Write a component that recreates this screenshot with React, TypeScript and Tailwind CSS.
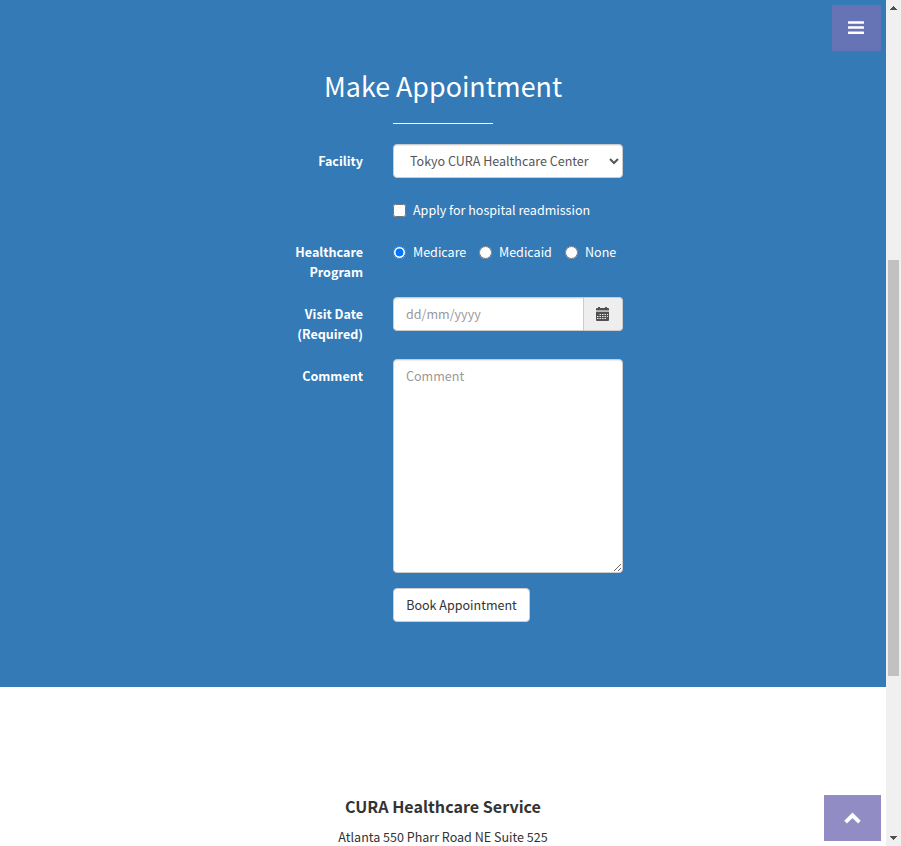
import type { ReactNode } from "react";

function Row({ label, children, className = "" }: { label: ReactNode; children: ReactNode; className?: string }) {
  return (
    <div className={`flex ${className}`}>
      <div className="mr-[30px] w-[100px] shrink-0 pt-[7px] text-right font-bold">{label}</div>
      <div className="w-[230px] shrink-0">{children}</div>
    </div>
  );
}

const field =
  "block w-full rounded-[4px] border border-[#ccc] bg-white px-3 text-[#555] shadow-[inset_0_1px_1px_rgba(0,0,0,0.075)] outline-none placeholder:text-[#999]";

function Program({ name, checked, className = "" }: { name: string; checked?: boolean; className?: string }) {
  return (
    <label className={`flex h-5 items-center ${className}`}>
      <input type="radio" name="program" defaultChecked={checked} className="mr-[7px] size-[13px]" />
      <span>{name}</span>
    </label>
  );
}

function CalendarIcon() {
  return (
    <svg width="13" height="14" viewBox="0 0 13 14" fill="#505050">
      <path d="M0 2Q0 1 1 1H2V0H4V1H9V0H11V1H12Q13 1 13 2V3.6H0Z" />
      <path d="M0 3.6H13V5H0Z" fill="#bbb" />
      <path d="M0 5H13V13Q13 14 12 14H1Q0 14 0 13Z" />
      <path
        d="M3.5 7.5H5M6 7.5H7.5M8.5 7.5H10M11 7.5H12M1 9.5H2.5M3.5 9.5H5M6 9.5H7.5M8.5 9.5H10M11 9.5H12M1 11.5H2.5M3.5 11.5H5M6 11.5H7.5M8.5 11.5H10"
        stroke="#e8e8e8"
        strokeWidth="1"
      />
    </svg>
  );
}

export default function App() {
  return (
    <div className="relative flex h-[846px] w-[901px] overflow-hidden bg-white font-['Noto_Sans_CJK_SC',sans-serif] text-[12.54px] leading-5 text-[#333]">
      <main className="flex w-[886px] flex-col">
        <section className="flex h-[687px] shrink-0 flex-col items-center bg-[#337ab7] text-white">
          <h2 className="mt-[69px] h-[33px] text-[26.85px] leading-[33px] whitespace-nowrap">Make Appointment</h2>
          <div className="mt-[21px] h-px w-[100px] bg-white" />
          <form className="mt-5 ml-[-130px] flex w-[230px] flex-col">
            <Row label="Facility" className="h-[34px]">
              <select className={`${field} h-[34px] pt-[5px] pb-[7px]`} defaultValue="tokyo">
                <option value="tokyo">Tokyo CURA Healthcare Center</option>
              </select>
            </Row>
            <Row label="" className="mt-[22px] h-5">
              <label className="flex h-5 items-center">
                <input type="checkbox" className="mr-[7px] size-[13px]" />
                <span className="whitespace-nowrap">Apply for hospital readmission</span>
              </label>
            </Row>
            <Row label={<>Healthcare<br />Program</>} className="mt-[15px] h-[47px]">
              <div className="flex pt-[7px]">
                <Program name="Medicare" checked className="w-[86px]" />
                <Program name="Medicaid" className="w-[86px]" />
                <Program name="None" />
              </div>
            </Row>
            <Row label={<>Visit Date<br />(Required)</>} className="mt-[15px] h-[47px]">
              <div className="flex h-[34px]">
                <input type="text" placeholder="dd/mm/yyyy" className={`${field} rounded-r-none py-[6px]`} />
                <span className="flex w-[39px] shrink-0 items-center rounded-r-[4px] border border-l-0 border-[#ccc] bg-[#eee] pl-3">
                  <CalendarIcon />
                </span>
              </div>
            </Row>
            <Row label="Comment" className="mt-[15px] h-[214px]">
              <textarea placeholder="Comment" className={`${field} h-[214px] py-[6px]`} />
            </Row>
            <Row label="" className="mt-[15px] h-[34px]">
              <button type="button" className="h-[34px] w-[137px] rounded-[4px] border border-[#ccc] bg-white text-[#333]">
                Book Appointment
              </button>
            </Row>
          </form>
        </section>
        <footer className="flex flex-col items-center pt-[109px]">
          <h4 className="text-[16.1px] leading-5 font-bold">CURA Healthcare Service</h4>
          <p className="mt-[11px]">Atlanta 550 Pharr Road NE Suite 525</p>
        </footer>
      </main>
      <aside className="flex w-[15px] flex-col bg-[#f0f0f0]">
        <svg width="15" height="15" viewBox="0 0 15 15" fill="#505050" shapeRendering="crispEdges">
          <path d="M7 6H8V7H9V8H10V9H11V10H4V9H5V8H6V7H7Z" />
        </svg>
        <div className="mt-[245px] ml-[2px] h-[416px] w-[11px] bg-[#c1c1c1]" />
        <svg className="mt-auto" width="15" height="15" viewBox="0 0 15 15" fill="#505050" shapeRendering="crispEdges">
          <path d="M4 5H11V6H10V7H9V8H8V9H7V8H6V7H5V6H4Z" />
        </svg>
      </aside>
      <button aria-label="Menu" className="absolute top-[5px] left-[832px] flex h-[46px] w-[49px] items-center bg-[#6673b5] pl-4">
        <svg width="16" height="14" viewBox="0 0 16 14" fill="white">
          <rect y="0.2" width="16" height="2.6" rx=".6" />
          <rect y="5.2" width="16" height="2.6" rx=".6" />
          <rect y="10.4" width="16" height="2.6" rx=".6" />
        </svg>
      </button>
      <button aria-label="Back to top" className="absolute top-[795px] left-[824px] flex h-[46px] w-[57px] items-center justify-center bg-[#918dc4]">
        <svg width="17" height="12" viewBox="0 0 17 12" fill="none" stroke="white" strokeWidth="3.8">
          <path d="M1.6 10.2L8.5 3.3L15.4 10.2" />
        </svg>
      </button>
    </div>
  );
}
